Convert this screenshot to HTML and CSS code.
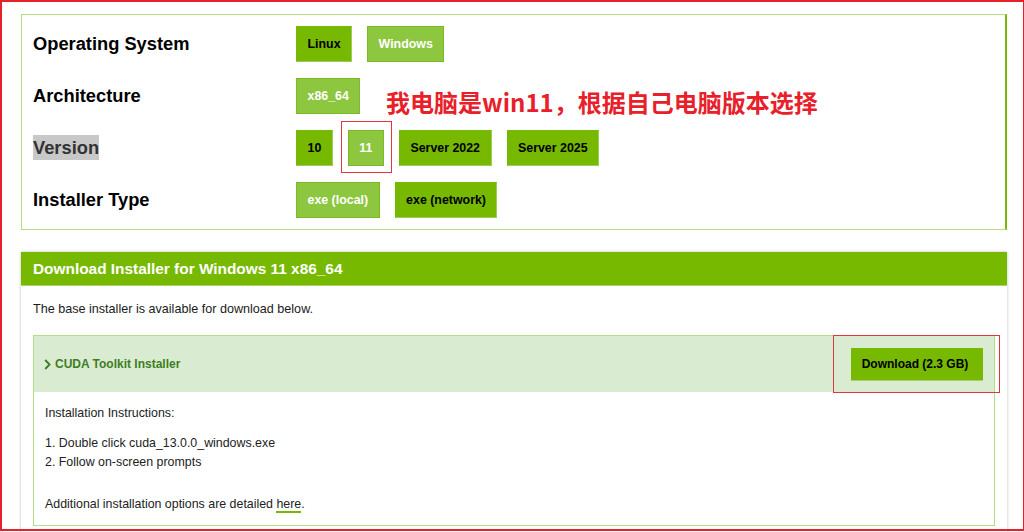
FILE: index.html
```html
<!DOCTYPE html>
<html lang="en">
<head>
<meta charset="utf-8">
<title>CUDA Toolkit Downloads</title>
<link rel="stylesheet" href="styles.css">
</head>
<body>
<div class="page">
  <section class="selector">
    <div class="row">
      <div class="label">Operating System</div>
      <div class="opts">
        <span class="opt">Linux</span>
        <span class="opt sel">Windows</span>
      </div>
    </div>
    <div class="row">
      <div class="label">Architecture</div>
      <div class="opts">
        <span class="opt sel">x86_64</span>
      </div>
    </div>
    <div class="row">
      <div class="label"><span class="hl">Version</span></div>
      <div class="opts">
        <span class="opt">10</span>
        <span class="opt sel marked">11</span>
        <span class="opt">Server 2022</span>
        <span class="opt">Server 2025</span>
      </div>
    </div>
    <div class="row">
      <div class="label">Installer Type</div>
      <div class="opts">
        <span class="opt sel">exe (local)</span>
        <span class="opt">exe (network)</span>
      </div>
    </div>
  </section>

  <section class="panel">
    <div class="panel-head">Download Installer for Windows 11 x86_64</div>
    <div class="panel-body">
      <p class="intro">The base installer is available for download below.</p>
      <div class="installer">
        <div class="inst-head">
          <span class="inst-title"><svg class="chev" width="7" height="11" viewBox="0 0 7 11"><path d="M1.2 1 L5.6 5.5 L1.2 10" fill="none" stroke="#3f7d1f" stroke-width="1.8"/></svg>CUDA Toolkit Installer</span>
          <span class="dl-wrap"><span class="dl">Download (2.3 GB)</span></span>
        </div>
        <div class="inst-body">
          <p class="inst-p">Installation Instructions:</p>
          <ol class="steps">
            <li>Double click cuda_13.0.0_windows.exe</li>
            <li>Follow on-screen prompts</li>
          </ol>
          <p class="inst-more">Additional installation options are detailed <span class="here">here</span>.</p>
        </div>
      </div>
    </div>
  </section>

  <div class="note">我电脑是win11，根据自己电脑版本选择</div>
  <div class="frame"></div>
</div>
</body>
</html>
```

FILE: styles.css
```css
html, body {
  margin: 0;
  padding: 0;
  background: #ffffff;
}

body {
  font-family: "Liberation Sans", Arial, sans-serif;
  color: #1a1a1a;
}

.page {
  position: relative;
  width: 1024px;
  height: 532px;
  overflow: hidden;
  box-sizing: border-box;
  padding: 14px 17px 0 21px;
}

/* ---------- selector box ---------- */
.selector {
  border: 1px solid #b8db86;
  border-right: 2px solid #76b900;
  padding: 11px 0 11px 11px;
  display: flex;
  flex-direction: column;
  gap: 16px;
}

.row {
  display: flex;
  align-items: center;
  height: 36px;
}

.label {
  width: 263px;
  flex: none;
  font-size: 18.3px;
  font-weight: bold;
  color: #000;
}

.hl {
  background: #c8c8c8;
  color: #333;
  padding: 2px 0;
}

.opts {
  display: flex;
  gap: 15px;
}

.opt {
  position: relative;
  display: flex;
  align-items: center;
  height: 36px;
  box-sizing: border-box;
  padding: 0 10.5px;
  background: #76b900;
  border: 1px solid #76b900;
  border-right-color: #9ccc5c;
  border-bottom-color: #9ccc5c;
  font-size: 12.4px;
  font-weight: bold;
  color: #000;
}

.opt.sel {
  background: #8dc63f;
  border: 1px solid #7cbb22;
  color: #fff;
}

.marked::after {
  content: "";
  position: absolute;
  left: -8px;
  top: -10px;
  right: -9px;
  bottom: -8px;
  border: 1.5px solid #e5343b;
}

/* ---------- download panel ---------- */
.panel {
  margin-top: 22px;
  box-shadow: 0 0 3px rgba(0, 0, 0, 0.25);
  background: #fff;
}

.panel-head {
  height: 34px;
  box-sizing: border-box;
  background: #76b900;
  border-bottom: 1px solid #a6d36c;
  color: #fff;
  font-size: 15.4px;
  font-weight: bold;
  display: flex;
  align-items: center;
  padding-left: 12px;
}

.panel-body {
  padding: 14px 12px 8px 12px;
}

.intro {
  margin: 0 0 16px 0;
  font-size: 12.6px;
  line-height: 19px;
  color: #1a1a1a;
}

.installer {
  border: 1px solid #b8db86;
}

.inst-head {
  height: 56px;
  background: #d9ecd1;
  display: flex;
  align-items: center;
  justify-content: space-between;
  padding: 0 11px 0 10px;
}

.inst-title {
  display: flex;
  align-items: center;
  gap: 4px;
  font-size: 12px;
  font-weight: bold;
  color: #3f7d1f;
}

.dl-wrap {
  position: relative;
}

.dl-wrap::after {
  content: "";
  position: absolute;
  left: -18px;
  top: -13px;
  right: -17px;
  bottom: -12px;
  border: 1.5px solid #e5343b;
}

.dl {
  display: flex;
  align-items: center;
  height: 33px;
  box-sizing: border-box;
  padding: 0 14px 0 10px;
  background: #76b900;
  border-bottom: 1px solid #a6d36c;
  font-size: 12px;
  font-weight: bold;
  color: #000;
  width: 132px;
  justify-content: center;
}

.inst-body {
  padding: 12px 11px 11px 11px;
  font-size: 12.4px;
  line-height: 19px;
  color: #222;
}

.inst-p {
  margin: 0 0 11px 0;
}

.steps {
  margin: 0 0 23px 0;
  padding: 0;
  list-style: none;
  counter-reset: step;
}

.steps li {
  counter-increment: step;
}

.steps li::before {
  content: counter(step) ". ";
}

.inst-more {
  margin: 0;
}

.here {
  border-bottom: 2px solid #76b900;
}

/* ---------- annotations ---------- */
.note {
  position: absolute;
  left: 386px;
  top: 86px;
  font-family: "Noto Sans CJK SC", "Noto Sans", sans-serif;
  font-size: 24px;
  font-weight: bold;
  color: #e8202a;
  white-space: nowrap;
  line-height: 32px;
}

.frame {
  position: absolute;
  left: 0;
  top: 0;
  width: 1024px;
  height: 531px;
  box-sizing: border-box;
  border: 2px solid #e5222b;
  border-right-width: 1px;
  pointer-events: none;
}
```
